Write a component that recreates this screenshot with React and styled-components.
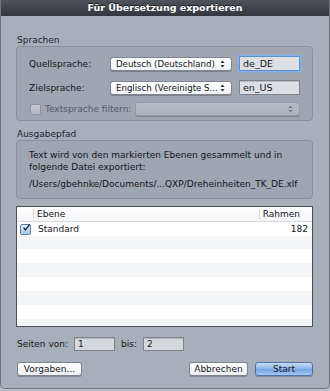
import styled, { createGlobalStyle } from 'styled-components'

const GlobalStyle = createGlobalStyle`
    html, body {
        margin: 0;
        padding: 0;
        background: #b9bdc5;
    }
    body {
        font-family: "DejaVu Sans", "Liberation Sans", sans-serif;
        font-size: 9px;
        color: #15161a;
    }
`

const Arrows = () => (
    <svg width="5" height="8" viewBox="0 0 5 8">
        <path d="M0.5 3 L2.5 0.5 L4.5 3 Z" fill="#2b2d31" />
        <path d="M0.5 5 L2.5 7.5 L4.5 5 Z" fill="#2b2d31" />
    </svg>
)

const Check = () => (
    <svg width="10" height="10" viewBox="0 0 10 10">
        <path d="M2 4.5 L4.3 7.5 L9.5 0.5" stroke="#13253f" strokeWidth="1.6" fill="none" />
    </svg>
)

const App = () => {
    return (
        <>
            <GlobalStyle />
            <Dialog>
                <TitleBar>Für Übersetzung exportieren</TitleBar>
                <Content>
                    <SectionLabel>Sprachen</SectionLabel>
                    <GroupBox $pad="9px 11px 4px 12px">
                        <FormRow>
                            <RowLabel>Quellsprache:</RowLabel>
                            <Popup $width={122}>
                                <span>Deutsch (Deutschland)</span>
                                <Arrows />
                            </Popup>
                            <CodeField $focused>de_DE</CodeField>
                        </FormRow>
                        <FormRow $top={9}>
                            <RowLabel>Zielsprache:</RowLabel>
                            <Popup $width={122}>
                                <span>Englisch (Vereinigte S...</span>
                                <Arrows />
                            </Popup>
                            <CodeField>en_US</CodeField>
                        </FormRow>
                        <FormRow $top={7} $height={14}>
                            <CheckLabel>
                                <CheckBox />
                                <span>Textsprache filtern:</span>
                            </CheckLabel>
                            <Popup $width={165} $disabled>
                                <span />
                                <Arrows />
                            </Popup>
                        </FormRow>
                    </GroupBox>

                    <SectionLabel $top={8}>Ausgabepfad</SectionLabel>
                    <GroupBox $pad="8px 11px 8px 11px">
                        <InfoText>
                            Text wird von den markierten Ebenen gesammelt und in
                            <br />
                            folgende Datei exportiert:
                        </InfoText>
                        <PathText>/Users/gbehnke/Documents/...QXP/Dreheinheiten_TK_DE.xlf</PathText>
                    </GroupBox>

                    <Table>
                        <HeaderRow>
                            <HeaderCell $grow>Ebene</HeaderCell>
                            <HeaderCell $right>Rahmen</HeaderCell>
                        </HeaderRow>
                        <TableRow>
                            <RowCheck>
                                <Check />
                            </RowCheck>
                            <Cell $grow>Standard</Cell>
                            <Cell $right>182</Cell>
                        </TableRow>
                    </Table>

                    <PagesRow>
                        <span>Seiten von:</span>
                        <PageField>1</PageField>
                        <span>bis:</span>
                        <PageField>2</PageField>
                    </PagesRow>

                    <ButtonRow>
                        <Button $width={65}>Vorgaben...</Button>
                        <Spacer />
                        <Button $width={59}>Abbrechen</Button>
                        <Button $width={58} $primary>Start</Button>
                    </ButtonRow>
                </Content>
            </Dialog>
        </>
    )
}

export default App

//styled components

const Dialog = styled.div`
    width: 330px;
    height: 389px;
    box-sizing: border-box;
    background: #a8aeba;
    border: 1px solid #6f747d;
    border-top: none;
    border-radius: 0 0 5px 5px;
    display: flex;
    flex-direction: column;
    overflow: hidden;
`

const TitleBar = styled.div`
    height: 16px;
    flex-shrink: 0;
    background: linear-gradient(#50535a, #33363c);
    color: #ffffff;
    font-weight: bold;
    font-size: 9.5px;
    line-height: 16px;
    text-align: center;
    text-shadow: 0 -1px 0 #1c1d20;
`

const Content = styled.div`
    display: flex;
    flex-direction: column;
    padding: 19px 16px 0 15px;
`

const SectionLabel = styled.div`
    height: 11px;
    line-height: 11px;
    margin-top: ${p => p.$top || 0}px;
    padding-left: 1px;
    color: #22242a;
`

const GroupBox = styled.div`
    display: flex;
    flex-direction: column;
    padding: ${p => p.$pad};
    background: #9fa5b1;
    border: 1px solid #8a909b;
    border-radius: 4px;
`

const FormRow = styled.div`
    display: flex;
    align-items: center;
    height: ${p => p.$height || 15}px;
    margin-top: ${p => p.$top || 0}px;
`

const RowLabel = styled.div`
    width: 81px;
    flex-shrink: 0;
`

const CheckLabel = styled.div`
    display: flex;
    align-items: center;
    gap: 4px;
    width: 105px;
    flex-shrink: 0;
    padding-left: 1px;
    color: #555b66;
`

const CheckBox = styled.div`
    width: 9px;
    height: 9px;
    border: 1px solid #8d929b;
    border-radius: 2px;
    background: linear-gradient(#c4c8cf, #b3b8c0);
`

const Popup = styled.div`
    width: ${p => p.$width}px;
    height: 14px;
    box-sizing: border-box;
    display: flex;
    align-items: center;
    justify-content: space-between;
    padding: 0 6px 0 5px;
    border: 1px solid ${p => (p.$disabled ? '#959aa4' : '#80858e')};
    border-radius: 3px;
    background: ${p => (p.$disabled ? 'linear-gradient(#b7bcc4, #adb2bb)' : 'linear-gradient(#ffffff, #f1f2f4)')};
    box-shadow: 0 1px 0 rgba(60, 64, 72, 0.35);
    white-space: nowrap;
    font-size: 8.6px;
    svg {
        opacity: ${p => (p.$disabled ? 0.45 : 1)};
    }
`

const CodeField = styled.div`
    width: 61px;
    height: 15px;
    box-sizing: border-box;
    margin-left: 7px;
    padding-left: 3px;
    line-height: 13px;
    background: #dcdfe4;
    border: 1px solid ${p => (p.$focused ? '#5d8fd1' : '#7d828b')};
    box-shadow: ${p => (p.$focused ? '0 0 0 1.5px #87b1e6' : 'inset 0 1px 0 #b8bcc3')};
    font-size: 9.5px;
`

const InfoText = styled.div`
    line-height: 12px;
    padding-left: 1px;
`

const PathText = styled.div`
    line-height: 12px;
    margin-top: 5px;
    padding-left: 1px;
`

const Table = styled.div`
    height: 121px;
    box-sizing: border-box;
    margin-top: 7px;
    border: 1px solid #4d5158;
    background: repeating-linear-gradient(#ffffff 0 14px, #f4f5f7 14px 28px);
    background-position: 0 14px;
    display: flex;
    flex-direction: column;
`

const HeaderRow = styled.div`
    height: 14px;
    display: flex;
    align-items: center;
    background: linear-gradient(#ffffff, #f3f4f6);
    border-bottom: 1px solid #d8dade;
    padding-left: 16px;
`

const HeaderCell = styled.div`
    flex: ${p => (p.$grow ? 1 : 'none')};
    height: 10px;
    line-height: 10px;
    padding: 0 ${p => (p.$right ? '12px' : '0')} 0 3px;
    border-left: 1px solid #d6d8dc;
`

const TableRow = styled.div`
    height: 14px;
    display: flex;
    align-items: center;
    padding: 0 4px 0 3px;
    background: #ffffff;
`

const RowCheck = styled.div`
    width: 9px;
    height: 9px;
    margin-right: 7px;
    border: 1px solid #5c7fae;
    border-radius: 2px;
    background: linear-gradient(#e4eefa, #a9c6ea);
    display: flex;
    align-items: center;
    justify-content: center;
    svg {
        margin-top: -2px;
        margin-left: 1px;
    }
`

const Cell = styled.div`
    flex: ${p => (p.$grow ? 1 : 'none')};
    text-align: ${p => (p.$right ? 'right' : 'left')};
`

const PagesRow = styled.div`
    display: flex;
    align-items: center;
    height: 15px;
    margin-top: 9px;
    padding-left: 1px;
    span + div {
        margin-left: 6px;
    }
    div + span {
        margin-left: 6px;
        margin-right: 0;
    }
`

const PageField = styled.div`
    width: 41px;
    height: 14px;
    box-sizing: border-box;
    padding-left: 3px;
    line-height: 12px;
    background: #d4d7dc;
    border: 1px solid #7d828b;
    box-shadow: inset 0 1px 0 #b4b8bf;
`

const ButtonRow = styled.div`
    display: flex;
    align-items: center;
    gap: 7px;
    margin-top: 11px;
    padding-left: 1px;
`

const Spacer = styled.div`
    flex: 1;
`

const Button = styled.div`
    width: ${p => p.$width}px;
    height: 14px;
    box-sizing: border-box;
    display: flex;
    align-items: center;
    justify-content: center;
    border: 1px solid ${p => (p.$primary ? '#4f73a8' : '#7d828b')};
    border-radius: 3px;
    background: ${p => (p.$primary ? 'linear-gradient(#c8dcf5, #8db6ea 50%, #74a4e2 51%, #a3c6f1)' : 'linear-gradient(#ffffff, #eceef1)')};
    box-shadow: 0 1px 0 rgba(60, 64, 72, 0.35);
    color: #17181b;
`
